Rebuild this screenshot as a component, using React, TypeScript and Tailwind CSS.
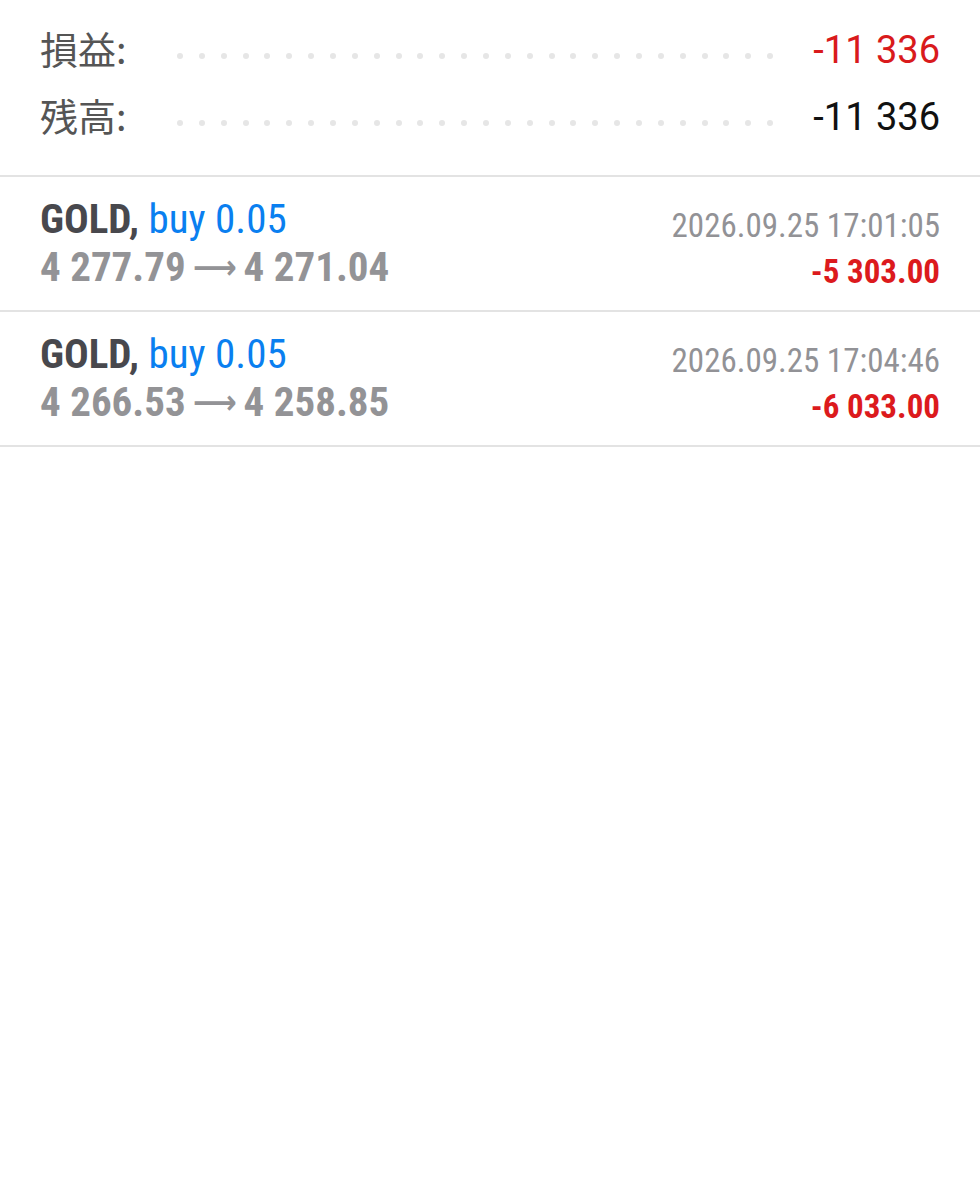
import React from "react";

const trades = [
  { symbol: "GOLD,", side: "buy 0.05", open: "4 277.79", close: "4 271.04", time: "2026.09.25 17:01:05", profit: "-5 303.00" },
  { symbol: "GOLD,", side: "buy 0.05", open: "4 266.53", close: "4 258.85", time: "2026.09.25 17:04:46", profit: "-6 033.00" },
];

const Dots: React.FC = () => (
  <div className="flex-1 flex justify-between items-center mr-[40px] pt-[10px]">
    {Array.from({ length: 28 }).map((_, i) => (
      <span key={i} className="w-[6px] h-[6px] rounded-full bg-[#e6e6e6]" />
    ))}
  </div>
);

const SummaryRow: React.FC<{ label: string; value: string; valueClass: string }> = ({ label, value, valueClass }) => (
  <div className="h-[67px] flex items-center">
    <span className="w-[137px] text-[38px] text-[#555] -mt-[6px] font-['Noto_Sans_CJK_JP',sans-serif]">{label}</span>
    <Dots />
    <span className={`text-[38px] font-['Roboto',sans-serif] ${valueClass}`}>{value}</span>
  </div>
);

const App: React.FC = () => {
  return (
    <div className="min-h-screen bg-white font-['Roboto_Condensed','Liberation_Sans_Narrow','DejaVu_Sans_Condensed',Roboto,sans-serif]">
      {/* Summary */}
      <div className="px-10 pt-[17px] pb-[24px] border-b-2 border-[#e3e3e3]">
        <SummaryRow label="損益:" value="-11 336" valueClass="text-[#d91a1c]" />
        <SummaryRow label="残高:" value="-11 336" valueClass="text-[#111]" />
      </div>

      {/* Deals */}
      {trades.map((t, i) => (
        <div key={i} className="border-b-2 border-[#e3e3e3] flex justify-between px-10 h-[135px]">
          <div className="pt-[18px] leading-[48px] text-[41px] [font-stretch:condensed]">
            <div>
              <span className="font-bold text-[#48484d]">{t.symbol}</span>{" "}
              <span className="text-[#0a7ff0]">{t.side}</span>
            </div>
            <div className="font-bold text-[#939396] flex items-center">
              <span>{t.open}</span>
              <span className="font-bold font-['DejaVu_Sans',sans-serif] text-[34px] mx-[7px] leading-none">⟶</span>
              <span>{t.close}</span>
            </div>
          </div>
          <div className="pt-[26px] leading-[46px] text-[33px] text-right [font-stretch:condensed]">
            <div className="text-[#929296]">{t.time}</div>
            <div className="font-bold text-[#dc1a1d]">{t.profit}</div>
          </div>
        </div>
      ))}
    </div>
  );
};

export default App;
